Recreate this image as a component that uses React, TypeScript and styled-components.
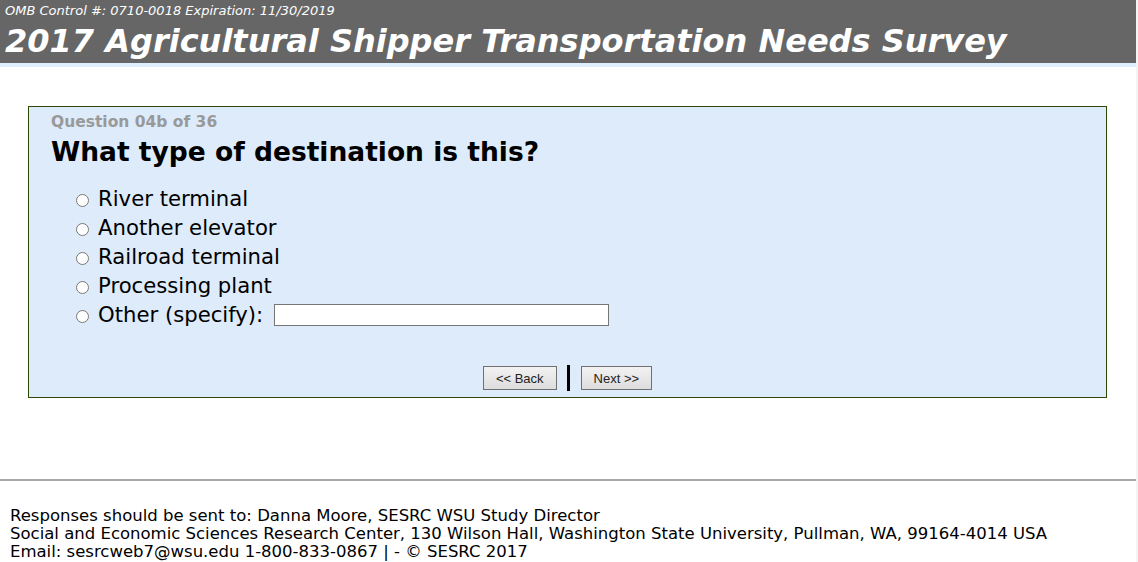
import React from "react";
import styled, { createGlobalStyle } from "styled-components";

const Global = createGlobalStyle`
  html { background: #f4f4f4; }
  body {
    margin: 0;
    font-family: "DejaVu Sans", Verdana, sans-serif;
    color: #000;
  }
`;

const Page = styled.div`
  width: 1136px;
  min-height: 562px;
  background: #fff;
`;

const Header = styled.header`
  background: #666666;
  border-bottom: 4px solid #ddeeff;
  padding: 3px 0 0 5px;
  height: 60px;
  box-sizing: content-box;
`;

const Omb = styled.div`
  color: #fff;
  font-style: italic;
  font-size: 13px;
  line-height: 15px;
`;

const Title = styled.h1`
  margin: 4px 0 0 0;
  color: #fff;
  font-style: italic;
  font-weight: bold;
  font-size: 32px;
  line-height: 38px;
`;

const Main = styled.main`
  padding: 39px 29px 0 28px;
  height: 412px;
  box-sizing: border-box;
`;

const QuestionBox = styled.section`
  border: 1px solid #2d4a00;
  background: #ddebfb;
  height: 292px;
  box-sizing: border-box;
  padding: 5px 0 0 22px;
  display: flex;
  flex-direction: column;
`;

const QNumber = styled.div`
  color: #999999;
  font-weight: bold;
  font-size: 15.5px;
  line-height: 20px;
`;

const QText = styled.h2`
  margin: 3px 0 0 0;
  font-size: 26.5px;
  font-weight: bold;
  line-height: 34px;
`;

const Options = styled.div`
  margin-top: 15px;
  padding-left: 25px;
  display: flex;
  flex-direction: column;
`;

const OptionRow = styled.label`
  display: flex;
  align-items: center;
  height: 29px;
  font-size: 21.2px;
`;

const Radio = styled.input`
  width: 13px;
  height: 13px;
  margin: 3px 9px 0 0;
`;

const SpecifyInput = styled.input`
  margin-left: 11px;
  width: 335px;
  height: 22px;
  box-sizing: border-box;
  border: 1px solid #767676;
  background: #fff;
  padding: 1px 2px;
`;

const Nav = styled.div`
  margin-top: 36px;
  margin-left: -22px;
  display: flex;
  justify-content: center;
  align-items: center;
`;

const NavButton = styled.button`
  font-family: "Liberation Sans", Arial, sans-serif;
  font-size: 13px;
  height: 24px;
  padding: 0 12px;
  border: 1px solid #707070;
  background: linear-gradient(#f2f2f2, #dddddd);
  color: #222;
  border-radius: 0;
`;

const Divider = styled.span`
  display: inline-block;
  width: 3px;
  height: 26px;
  background: #000;
  margin: 0 11px 0 10px;
`;

const Rule = styled.hr`
  margin: 0;
  border: none;
  border-top: 2px solid #a9a9a9;
  height: 0;
`;

const Footer = styled.footer`
  padding: 26px 0 0 10px;
  font-size: 16.5px;
  line-height: 18px;
  color: #000;
`;

const options = [
  "River terminal",
  "Another elevator",
  "Railroad terminal",
  "Processing plant",
];

export default function App() {
  return (
    <>
      <Global />
      <Page>
        <Header>
          <Omb>OMB Control #: 0710-0018 Expiration: 11/30/2019</Omb>
          <Title>2017 Agricultural Shipper Transportation Needs Survey</Title>
        </Header>
        <Main>
          <QuestionBox>
            <QNumber>Question 04b of 36</QNumber>
            <QText>What type of destination is this?</QText>
            <Options>
              {options.map((o) => (
                <OptionRow key={o}>
                  <Radio type="radio" name="dest" />
                  {o}
                </OptionRow>
              ))}
              <OptionRow>
                <Radio type="radio" name="dest" />
                Other (specify):
                <SpecifyInput type="text" />
              </OptionRow>
            </Options>
            <Nav>
              <NavButton>&lt;&lt; Back</NavButton>
              <Divider />
              <NavButton>Next &gt;&gt;</NavButton>
            </Nav>
          </QuestionBox>
        </Main>
        <Rule />
        <Footer>
          <div>Responses should be sent to: Danna Moore, SESRC WSU Study Director</div>
          <div>
            Social and Economic Sciences Research Center, 130 Wilson Hall, Washington State University, Pullman, WA, 99164-4014 USA
          </div>
          <div>Email: sesrcweb7@wsu.edu 1-800-833-0867 | - © SESRC 2017</div>
        </Footer>
      </Page>
    </>
  );
}
